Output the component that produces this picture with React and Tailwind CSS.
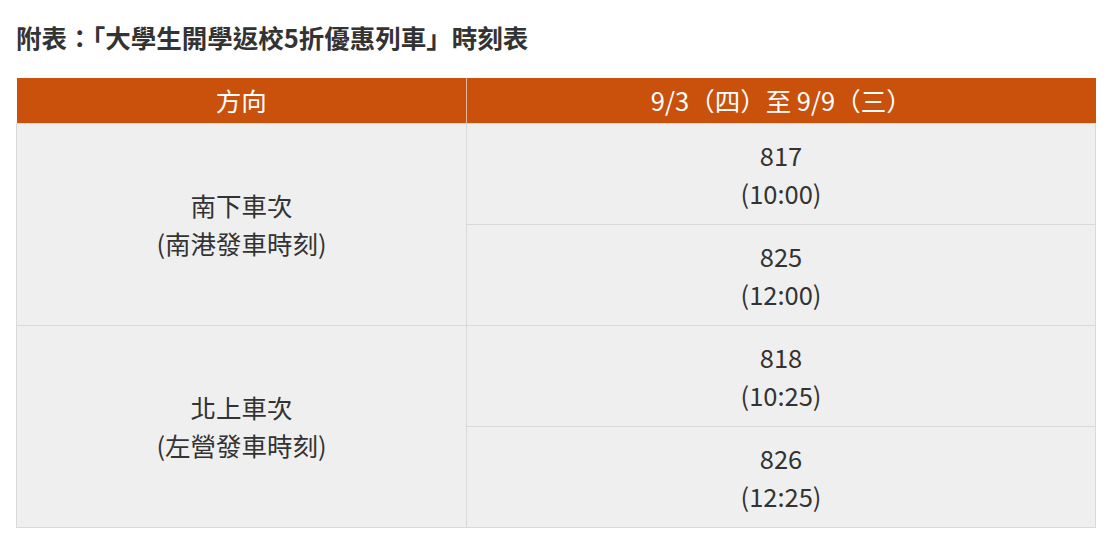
export default function App() {
  const font = { fontFamily: '"Noto Sans CJK TC", "Noto Sans", sans-serif' };
  const rows = [
    { dir: ["南下車次", "(南港發車時刻)"], trains: [["817", "(10:00)"], ["825", "(12:00)"]] },
    { dir: ["北上車次", "(左營發車時刻)"], trains: [["818", "(10:25)"], ["826", "(12:25)"]] },
  ];
  return (
    <div className="w-[1114px] h-[542px] bg-white text-[#333]" style={font}>
      <div className="px-4 pt-[20px]">
        <h2 className="text-[25.5px] font-bold leading-[34px]">附表：「大學生開學返校5折優惠列車」時刻表</h2>
        <table className="mt-[24px] w-[1080px] border-collapse text-[25.5px]">
          <thead>
            <tr className="bg-[#c9510c] text-white h-[45px]">
              <th className="w-[450px] font-normal leading-[30px] border-r border-[#e8b597]">方向</th>
              <th className="font-normal leading-[30px]">9/3（四）至 9/9（三）</th>
            </tr>
          </thead>
          <tbody className="bg-[#efefef]">
            {rows.map((r, i) =>
              r.trains.map((t, j) => (
                <tr key={i + "-" + j} className="h-[101px]">
                  {j === 0 && (
                    <td rowSpan={2} className="text-center border border-[#d9d9d9] leading-[38px]">
                      {r.dir[0]}
                      <br />
                      {r.dir[1]}
                    </td>
                  )}
                  <td className="text-center border border-[#d9d9d9] leading-[38px]">
                    {t[0]}
                    <br />
                    {t[1]}
                  </td>
                </tr>
              ))
            )}
          </tbody>
        </table>
      </div>
    </div>
  );
}
